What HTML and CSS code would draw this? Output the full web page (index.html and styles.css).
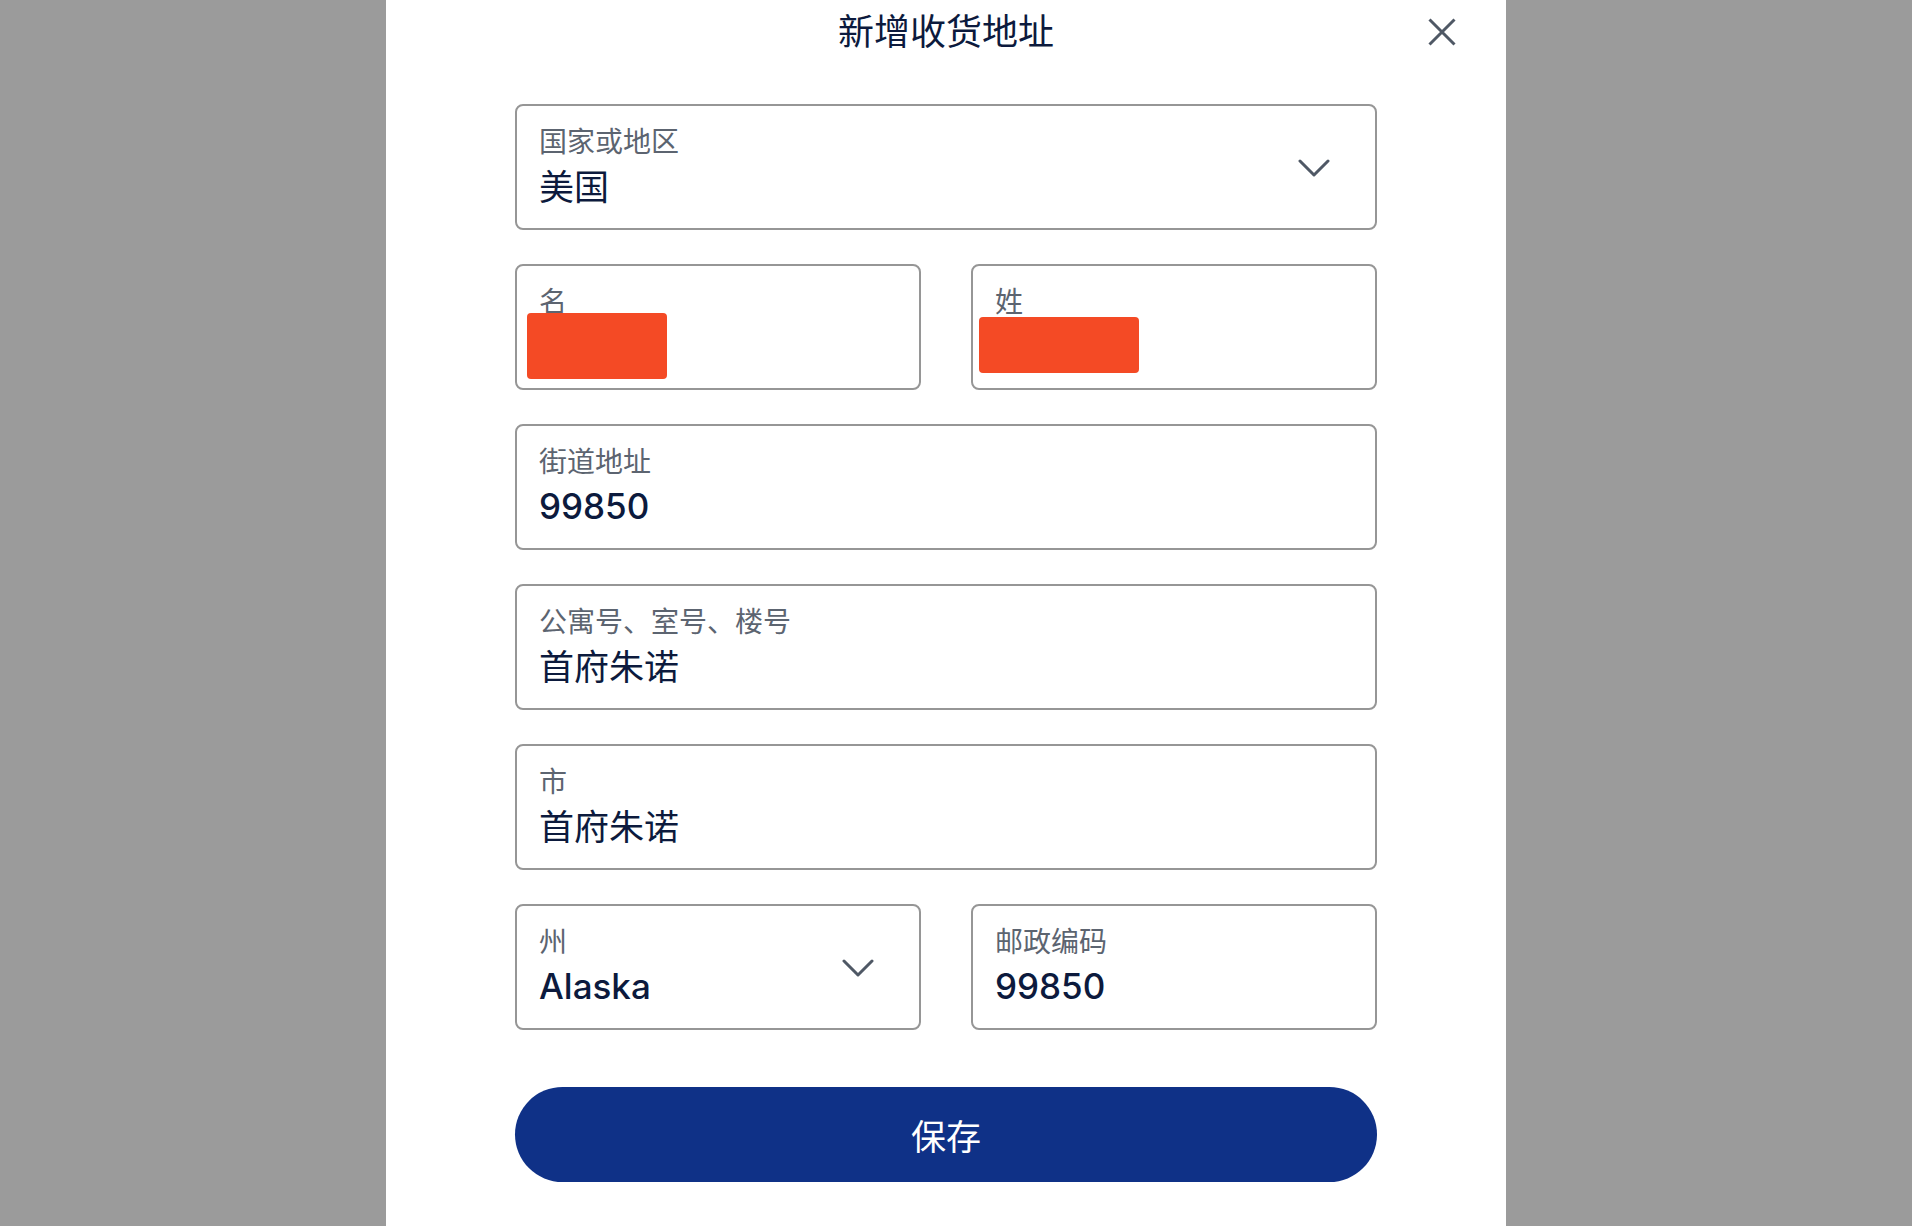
FILE: index.html
```html
<!DOCTYPE html>
<html lang="zh-CN">
<head>
<meta charset="utf-8">
<title>新增收货地址</title>
<link rel="stylesheet" href="styles.css">
</head>
<body>
<div class="modal">
  <div class="modal-header">
    <span></span>
    <h1 class="modal-title">新增收货地址</h1>
    <button class="close-btn" aria-label="关闭">
      <svg width="28" height="28" viewBox="0 0 28 28"><path d="M1.5 1.5 L26.5 26.5 M26.5 1.5 L1.5 26.5" stroke="#4f5865" stroke-width="3" fill="none"/></svg>
    </button>
  </div>
  <form class="form">
    <div class="field select">
      <div class="field-text">
        <div class="label">国家或地区</div>
        <div class="value cjk">美国</div>
      </div>
      <svg class="chevron" width="32" height="18" viewBox="0 0 32 18"><path d="M2 2 L16 16 L30 2" stroke="#4f5865" stroke-width="3" fill="none" stroke-linecap="round" stroke-linejoin="round"/></svg>
    </div>
    <div class="row">
      <div class="field">
        <div class="field-text">
          <div class="label">名</div>
          <div class="value"></div>
        </div>
        <div class="redact redact-first"></div>
      </div>
      <div class="field">
        <div class="field-text">
          <div class="label">姓</div>
          <div class="value"></div>
        </div>
        <div class="redact redact-last"></div>
      </div>
    </div>
    <div class="field">
      <div class="field-text">
        <div class="label">街道地址</div>
        <div class="value">99850</div>
      </div>
    </div>
    <div class="field">
      <div class="field-text">
        <div class="label">公寓号、室号、楼号</div>
        <div class="value cjk">首府朱诺</div>
      </div>
    </div>
    <div class="field">
      <div class="field-text">
        <div class="label">市</div>
        <div class="value cjk">首府朱诺</div>
      </div>
    </div>
    <div class="row">
      <div class="field select">
        <div class="field-text">
          <div class="label">州</div>
          <div class="value">Alaska</div>
        </div>
        <svg class="chevron" width="32" height="18" viewBox="0 0 32 18"><path d="M2 2 L16 16 L30 2" stroke="#4f5865" stroke-width="3" fill="none" stroke-linecap="round" stroke-linejoin="round"/></svg>
      </div>
      <div class="field">
        <div class="field-text">
          <div class="label">邮政编码</div>
          <div class="value">99850</div>
        </div>
      </div>
    </div>
    <button type="button" class="save-btn">保存</button>
  </form>
</div>
</body>
</html>
```

FILE: styles.css
```css
* { box-sizing: border-box; }
html, body { margin: 0; padding: 0; }
body {
  background: #9b9b9b;
  font-family: "Noto Sans CJK SC", sans-serif;
  height: 1226px;
  overflow: hidden;
}
.modal {
  width: 1120px;
  margin-left: 386px;
  min-height: 1226px;
  background: #ffffff;
  padding: 0 129px;
}
.modal-header {
  display: grid;
  grid-template-columns: 1fr auto 1fr;
  align-items: start;
  height: 104px;
  padding-top: 7px;
  margin: 0 -79px;
}
.modal-title {
  margin: 0;
  font-family: "Noto Sans CJK SC", sans-serif;
  font-weight: 400;
  font-size: 36px;
  line-height: 44px;
  color: #0c1a3d;
}
.close-btn {
  justify-self: end;
  margin-top: 11px;
  padding: 0;
  border: 0;
  background: none;
  width: 28px;
  height: 28px;
  display: block;
}
.close-btn svg { display: block; }
.form {
  display: flex;
  flex-direction: column;
  gap: 34px;
}
.row {
  display: grid;
  grid-template-columns: 1fr 1fr;
  gap: 50px;
}
.field {
  position: relative;
  display: flex;
  height: 126px;
  border: 2px solid #969696;
  border-radius: 8px;
  padding: 17px 22px 0;
  background: #fff;
}
.field-text {
  flex: 1;
  align-self: flex-start;
}
.label {
  font-family: "Noto Sans CJK SC", sans-serif;
  font-size: 28px;
  line-height: 34px;
  color: #5c6470;
}
.value {
  margin-top: 7px;
  height: 44px;
  font-family: Inter, "Noto Sans CJK SC", sans-serif;
  font-weight: 500;
  font-size: 35px;
  line-height: 44px;
  color: #0c1a3d;
}
.value.cjk {
  font-weight: 400;
  margin-top: 8px;
}
.chevron {
  align-self: center;
  margin-right: 23px;
  margin-top: -15px;
  flex: none;
}
.redact {
  position: absolute;
  background: #f44a25;
  border-radius: 4px;
}
.redact-first { left: 10px; top: 47px; width: 140px; height: 66px; }
.redact-last { left: 6px; top: 51px; width: 160px; height: 56px; }
.save-btn {
  margin-top: 23px;
  height: 95px;
  border: 0;
  border-radius: 48px;
  background: #0f3187;
  color: #ffffff;
  font-family: "Noto Sans CJK SC", sans-serif;
  font-size: 35px;
  font-weight: 400;
  display: flex;
  align-items: center;
  justify-content: center;
  width: 100%;
}
```
